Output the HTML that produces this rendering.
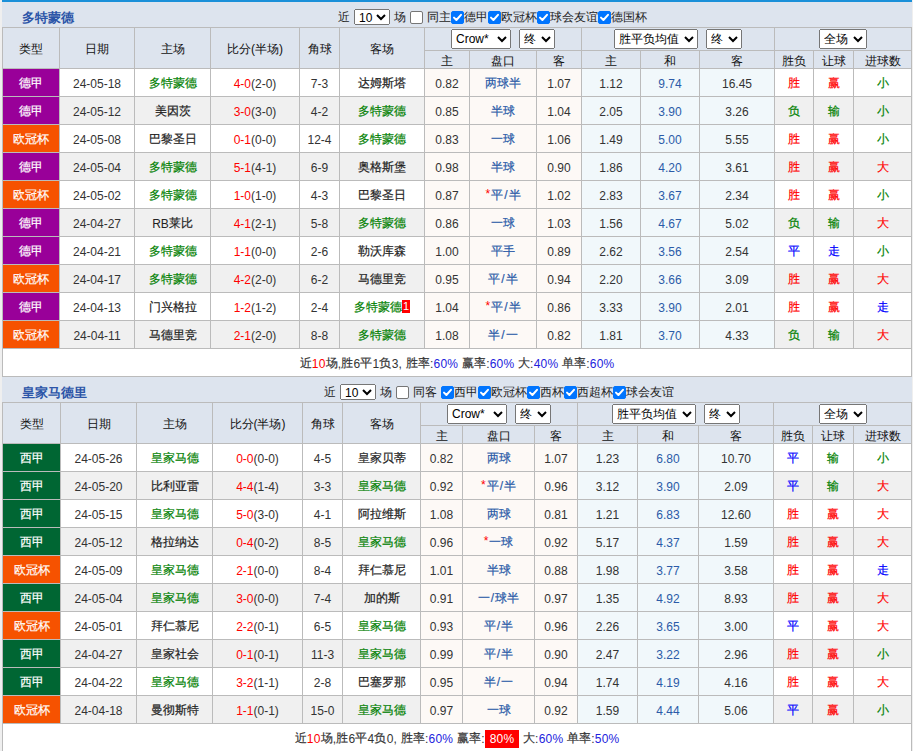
<!DOCTYPE html>
<html><head><meta charset="utf-8"><style>
*{box-sizing:border-box}
html,body{margin:0;padding:0}
body{width:913px;height:751px;overflow:hidden;background:#efefef;position:relative;font-family:"Liberation Sans",sans-serif;font-size:12px;color:#333}
.sec{position:absolute;left:2px;width:910px}
.bluebar{position:absolute;left:0;top:0;width:910px;height:2px;background:#1a90d9}
.hbar{position:absolute;left:0;width:910px;height:25px;background:#dde4ee}
.ttl{position:absolute;left:20px;top:8px;font-size:13px;font-weight:bold;color:#2c55a8;line-height:15px}
.ct{position:absolute;line-height:16px;white-space:nowrap;color:#222;font-size:12px}
.cb{position:absolute;width:13px;height:13px;border:1px solid #767676;border-radius:2px;background:#fff}
.cb.on{background:#0075ff;border-color:#0075ff}
.cb svg{position:absolute;left:-1px;top:-1px}
select{font-family:"Liberation Sans",sans-serif;padding:0;margin:0;color:#000}
select.s10{position:absolute;width:36px;height:16px;font-size:12px}
select.hs{height:20px;font-size:12px;vertical-align:middle}
table{position:absolute;left:0;width:910px;table-layout:fixed;border-collapse:separate;border-spacing:0;border-left:1px solid #bbb;border-top:1px solid #bbb;background:#fff}
th,td{border-right:1px solid #bbb;border-bottom:1px solid #bbb;padding:2px 0 0 0;line-height:14px;text-align:center;font-weight:normal;white-space:nowrap;overflow:hidden}
th{background:#dde4ee;color:#111}
tr.h1 th{height:23px}
tr.h1 th.sel{padding-top:0}
tr.h2 th{height:18px}
tr.odd td,tr.even td{height:28px}
tr.even td{background:#f0f0f0}
td.lg{color:#fff}
td.tm{color:#222}
td.tm.g{color:#008000}
.red{color:#f00}
i.c{font-style:normal;position:relative;top:-1px;-webkit-text-stroke:0.2px currentColor}
th{-webkit-text-stroke:0}
.sl{margin:0 1px}
.star{position:relative;top:-2px;-webkit-text-stroke:0;margin-right:1px}
td.o1{background:#fdf9f6 !important}
td.o2{background:#f1f8fb !important}
td.pk{color:#2b5ba8}
td.blu{color:#2b5ba8}
.rc{display:inline-block;background:#f00;color:#fff;font-size:11px;line-height:13px;width:8px;text-align:center;vertical-align:2px;-webkit-text-stroke:0}
tr.sum td{height:28px;background:#fff;letter-spacing:0.2px}
.bl{color:#2222dd}
.yb{background:#f00;color:#fff;padding:2px 5px 2px 5px;-webkit-text-stroke:0}
</style></head><body>
<div class="sec" style="top:0px">
<div class="bluebar"></div>
<div class="hbar" style="top:2px"><span class="ttl">多特蒙德</span>
<span class="ct" style="left:336px;top:7px">近</span>
<select class="s10" style="left:352px;top:7px"><option>10</option></select>
<span class="ct" style="left:392px;top:7px">场</span>
<span class="cb" style="left:408px;top:9px"></span>
<span class="ct" style="left:425px;top:7px">同主</span>
<span class="cb on" style="left:449px;top:9px"><svg width="13" height="13" viewBox="0 0 13 13"><path d="M3 6.6 L5.4 9 L10 3.8" stroke="#fff" stroke-width="2" fill="none" stroke-linecap="round" stroke-linejoin="round"/></svg></span>
<span class="ct" style="left:462px;top:7px">德甲</span>
<span class="cb on" style="left:486px;top:9px"><svg width="13" height="13" viewBox="0 0 13 13"><path d="M3 6.6 L5.4 9 L10 3.8" stroke="#fff" stroke-width="2" fill="none" stroke-linecap="round" stroke-linejoin="round"/></svg></span>
<span class="ct" style="left:499px;top:7px">欧冠杯</span>
<span class="cb on" style="left:535px;top:9px"><svg width="13" height="13" viewBox="0 0 13 13"><path d="M3 6.6 L5.4 9 L10 3.8" stroke="#fff" stroke-width="2" fill="none" stroke-linecap="round" stroke-linejoin="round"/></svg></span>
<span class="ct" style="left:548px;top:7px">球会友谊</span>
<span class="cb on" style="left:596px;top:9px"><svg width="13" height="13" viewBox="0 0 13 13"><path d="M3 6.6 L5.4 9 L10 3.8" stroke="#fff" stroke-width="2" fill="none" stroke-linecap="round" stroke-linejoin="round"/></svg></span>
<span class="ct" style="left:609px;top:7px">德国杯</span>
</div>
<table style="top:27px"><colgroup>
<col style="width:57px">
<col style="width:75px">
<col style="width:76px">
<col style="width:89px">
<col style="width:40px">
<col style="width:85px">
<col style="width:45px">
<col style="width:67px">
<col style="width:45px">
<col style="width:59px">
<col style="width:59px">
<col style="width:75px">
<col style="width:39px">
<col style="width:40px">
<col style="width:58px">
</colgroup>
<tr class="h1">
<th rowspan="2">类型</th>
<th rowspan="2">日期</th>
<th rowspan="2">主场</th>
<th rowspan="2">比分(半场)</th>
<th rowspan="2">角球</th>
<th rowspan="2">客场</th>
<th colspan="3" class="sel"><select class="hs" style="width:60px"><option>Crow*</option></select><select class="hs" style="width:36px;margin-left:8px"><option>终</option></select></th>
<th colspan="3" class="sel"><select class="hs" style="width:84px"><option>胜平负均值</option></select><select class="hs" style="width:36px;margin-left:8px"><option>终</option></select></th>
<th colspan="3" class="sel"><select class="hs" style="width:48px"><option>全场</option></select></th>
</tr><tr class="h2">
<th>主</th>
<th>盘口</th>
<th>客</th>
<th>主</th>
<th>和</th>
<th>客</th>
<th>胜负</th>
<th>让球</th>
<th>进球数</th>
</tr>
<tr class="odd">
<td class="lg" style="background:#990099"><i class="c">德甲</i></td>
<td class="dt">24-05-18</td>
<td class="tm g"><i class="c">多特蒙德</i></td>
<td class="sc"><span class="red">4-0</span>(2-0)</td>
<td class="cn">7-3</td>
<td class="tm "><i class="c">达姆斯塔</i></td>
<td class="o1">0.82</td>
<td class="o1 pk"><i class="c">两球半</i></td>
<td class="o1">1.07</td>
<td class="o2">1.12</td>
<td class="o2 blu">9.74</td>
<td class="o2">16.45</td>
<td class="rs" style="color:#f00"><i class="c">胜</i></td>
<td class="rs" style="color:#f00"><i class="c">赢</i></td>
<td class="rs" style="color:#008000"><i class="c">小</i></td>
</tr>
<tr class="even">
<td class="lg" style="background:#990099"><i class="c">德甲</i></td>
<td class="dt">24-05-12</td>
<td class="tm "><i class="c">美因茨</i></td>
<td class="sc"><span class="red">3-0</span>(3-0)</td>
<td class="cn">4-2</td>
<td class="tm g"><i class="c">多特蒙德</i></td>
<td class="o1">0.85</td>
<td class="o1 pk"><i class="c">半球</i></td>
<td class="o1">1.04</td>
<td class="o2">2.05</td>
<td class="o2 blu">3.90</td>
<td class="o2">3.26</td>
<td class="rs" style="color:#008000"><i class="c">负</i></td>
<td class="rs" style="color:#008000"><i class="c">输</i></td>
<td class="rs" style="color:#008000"><i class="c">小</i></td>
</tr>
<tr class="odd">
<td class="lg" style="background:#f65200"><i class="c">欧冠杯</i></td>
<td class="dt">24-05-08</td>
<td class="tm "><i class="c">巴黎圣日</i></td>
<td class="sc"><span class="red">0-1</span>(0-0)</td>
<td class="cn">12-4</td>
<td class="tm g"><i class="c">多特蒙德</i></td>
<td class="o1">0.83</td>
<td class="o1 pk"><i class="c">一球</i></td>
<td class="o1">1.06</td>
<td class="o2">1.49</td>
<td class="o2 blu">5.00</td>
<td class="o2">5.55</td>
<td class="rs" style="color:#f00"><i class="c">胜</i></td>
<td class="rs" style="color:#f00"><i class="c">赢</i></td>
<td class="rs" style="color:#008000"><i class="c">小</i></td>
</tr>
<tr class="even">
<td class="lg" style="background:#990099"><i class="c">德甲</i></td>
<td class="dt">24-05-04</td>
<td class="tm g"><i class="c">多特蒙德</i></td>
<td class="sc"><span class="red">5-1</span>(4-1)</td>
<td class="cn">6-9</td>
<td class="tm "><i class="c">奥格斯堡</i></td>
<td class="o1">0.98</td>
<td class="o1 pk"><i class="c">半球</i></td>
<td class="o1">0.90</td>
<td class="o2">1.86</td>
<td class="o2 blu">4.20</td>
<td class="o2">3.61</td>
<td class="rs" style="color:#f00"><i class="c">胜</i></td>
<td class="rs" style="color:#f00"><i class="c">赢</i></td>
<td class="rs" style="color:#f00"><i class="c">大</i></td>
</tr>
<tr class="odd">
<td class="lg" style="background:#f65200"><i class="c">欧冠杯</i></td>
<td class="dt">24-05-02</td>
<td class="tm g"><i class="c">多特蒙德</i></td>
<td class="sc"><span class="red">1-0</span>(1-0)</td>
<td class="cn">4-3</td>
<td class="tm "><i class="c">巴黎圣日</i></td>
<td class="o1">0.87</td>
<td class="o1 pk"><span class="red star">*</span><i class="c">平</i><span class="sl"><i class="c">/</i></span><i class="c">半</i></td>
<td class="o1">1.02</td>
<td class="o2">2.83</td>
<td class="o2 blu">3.67</td>
<td class="o2">2.34</td>
<td class="rs" style="color:#f00"><i class="c">胜</i></td>
<td class="rs" style="color:#f00"><i class="c">赢</i></td>
<td class="rs" style="color:#008000"><i class="c">小</i></td>
</tr>
<tr class="even">
<td class="lg" style="background:#990099"><i class="c">德甲</i></td>
<td class="dt">24-04-27</td>
<td class="tm ">RB<i class="c">莱比</i></td>
<td class="sc"><span class="red">4-1</span>(2-1)</td>
<td class="cn">5-8</td>
<td class="tm g"><i class="c">多特蒙德</i></td>
<td class="o1">0.86</td>
<td class="o1 pk"><i class="c">一球</i></td>
<td class="o1">1.03</td>
<td class="o2">1.56</td>
<td class="o2 blu">4.67</td>
<td class="o2">5.02</td>
<td class="rs" style="color:#008000"><i class="c">负</i></td>
<td class="rs" style="color:#008000"><i class="c">输</i></td>
<td class="rs" style="color:#f00"><i class="c">大</i></td>
</tr>
<tr class="odd">
<td class="lg" style="background:#990099"><i class="c">德甲</i></td>
<td class="dt">24-04-21</td>
<td class="tm g"><i class="c">多特蒙德</i></td>
<td class="sc"><span class="red">1-1</span>(0-0)</td>
<td class="cn">2-6</td>
<td class="tm "><i class="c">勒沃库森</i></td>
<td class="o1">1.00</td>
<td class="o1 pk"><i class="c">平手</i></td>
<td class="o1">0.89</td>
<td class="o2">2.62</td>
<td class="o2 blu">3.56</td>
<td class="o2">2.54</td>
<td class="rs" style="color:#00f"><i class="c">平</i></td>
<td class="rs" style="color:#00f"><i class="c">走</i></td>
<td class="rs" style="color:#008000"><i class="c">小</i></td>
</tr>
<tr class="even">
<td class="lg" style="background:#f65200"><i class="c">欧冠杯</i></td>
<td class="dt">24-04-17</td>
<td class="tm g"><i class="c">多特蒙德</i></td>
<td class="sc"><span class="red">4-2</span>(2-0)</td>
<td class="cn">6-2</td>
<td class="tm "><i class="c">马德里竞</i></td>
<td class="o1">0.95</td>
<td class="o1 pk"><i class="c">平</i><span class="sl"><i class="c">/</i></span><i class="c">半</i></td>
<td class="o1">0.94</td>
<td class="o2">2.20</td>
<td class="o2 blu">3.66</td>
<td class="o2">3.09</td>
<td class="rs" style="color:#f00"><i class="c">胜</i></td>
<td class="rs" style="color:#f00"><i class="c">赢</i></td>
<td class="rs" style="color:#f00"><i class="c">大</i></td>
</tr>
<tr class="odd">
<td class="lg" style="background:#990099"><i class="c">德甲</i></td>
<td class="dt">24-04-13</td>
<td class="tm "><i class="c">门兴格拉</i></td>
<td class="sc"><span class="red">1-2</span>(1-2)</td>
<td class="cn">2-4</td>
<td class="tm g"><i class="c">多特蒙德</i><span class="rc">1</span></td>
<td class="o1">1.04</td>
<td class="o1 pk"><span class="red star">*</span><i class="c">平</i><span class="sl"><i class="c">/</i></span><i class="c">半</i></td>
<td class="o1">0.86</td>
<td class="o2">3.33</td>
<td class="o2 blu">3.90</td>
<td class="o2">2.01</td>
<td class="rs" style="color:#f00"><i class="c">胜</i></td>
<td class="rs" style="color:#f00"><i class="c">赢</i></td>
<td class="rs" style="color:#00f"><i class="c">走</i></td>
</tr>
<tr class="even">
<td class="lg" style="background:#f65200"><i class="c">欧冠杯</i></td>
<td class="dt">24-04-11</td>
<td class="tm "><i class="c">马德里竞</i></td>
<td class="sc"><span class="red">2-1</span>(2-0)</td>
<td class="cn">8-8</td>
<td class="tm g"><i class="c">多特蒙德</i></td>
<td class="o1">1.08</td>
<td class="o1 pk"><i class="c">半</i><span class="sl"><i class="c">/</i></span><i class="c">一</i></td>
<td class="o1">0.82</td>
<td class="o2">1.81</td>
<td class="o2 blu">3.70</td>
<td class="o2">4.33</td>
<td class="rs" style="color:#008000"><i class="c">负</i></td>
<td class="rs" style="color:#008000"><i class="c">输</i></td>
<td class="rs" style="color:#f00"><i class="c">大</i></td>
</tr>
<tr class="sum"><td colspan="15"><i class="c">近</i><span class="red">10</span><i class="c">场</i>,<i class="c">胜</i>6<i class="c">平</i>1<i class="c">负</i>3, <i class="c">胜率</i>:<span class="bl">60%</span> <i class="c">赢率</i>:<span class="bl">60%</span> <i class="c">大</i>:<span class="bl">40%</span> <i class="c">单率</i>:<span class="bl">60%</span></td></tr>
</table></div>
<div class="sec" style="top:375px">
<div class="hbar" style="top:2px"><span class="ttl">皇家马德里</span>
<span class="ct" style="left:322px;top:7px">近</span>
<select class="s10" style="left:338px;top:7px"><option>10</option></select>
<span class="ct" style="left:378px;top:7px">场</span>
<span class="cb" style="left:394px;top:9px"></span>
<span class="ct" style="left:411px;top:7px">同客</span>
<span class="cb on" style="left:439px;top:9px"><svg width="13" height="13" viewBox="0 0 13 13"><path d="M3 6.6 L5.4 9 L10 3.8" stroke="#fff" stroke-width="2" fill="none" stroke-linecap="round" stroke-linejoin="round"/></svg></span>
<span class="ct" style="left:452px;top:7px">西甲</span>
<span class="cb on" style="left:476px;top:9px"><svg width="13" height="13" viewBox="0 0 13 13"><path d="M3 6.6 L5.4 9 L10 3.8" stroke="#fff" stroke-width="2" fill="none" stroke-linecap="round" stroke-linejoin="round"/></svg></span>
<span class="ct" style="left:489px;top:7px">欧冠杯</span>
<span class="cb on" style="left:525px;top:9px"><svg width="13" height="13" viewBox="0 0 13 13"><path d="M3 6.6 L5.4 9 L10 3.8" stroke="#fff" stroke-width="2" fill="none" stroke-linecap="round" stroke-linejoin="round"/></svg></span>
<span class="ct" style="left:538px;top:7px">西杯</span>
<span class="cb on" style="left:562px;top:9px"><svg width="13" height="13" viewBox="0 0 13 13"><path d="M3 6.6 L5.4 9 L10 3.8" stroke="#fff" stroke-width="2" fill="none" stroke-linecap="round" stroke-linejoin="round"/></svg></span>
<span class="ct" style="left:575px;top:7px">西超杯</span>
<span class="cb on" style="left:611px;top:9px"><svg width="13" height="13" viewBox="0 0 13 13"><path d="M3 6.6 L5.4 9 L10 3.8" stroke="#fff" stroke-width="2" fill="none" stroke-linecap="round" stroke-linejoin="round"/></svg></span>
<span class="ct" style="left:624px;top:7px">球会友谊</span>
</div>
<table style="top:27px"><colgroup>
<col style="width:58px">
<col style="width:76px">
<col style="width:76px">
<col style="width:90px">
<col style="width:40px">
<col style="width:78px">
<col style="width:42px">
<col style="width:72px">
<col style="width:43px">
<col style="width:60px">
<col style="width:61px">
<col style="width:75px">
<col style="width:39px">
<col style="width:41px">
<col style="width:58px">
</colgroup>
<tr class="h1">
<th rowspan="2">类型</th>
<th rowspan="2">日期</th>
<th rowspan="2">主场</th>
<th rowspan="2">比分(半场)</th>
<th rowspan="2">角球</th>
<th rowspan="2">客场</th>
<th colspan="3" class="sel"><select class="hs" style="width:60px"><option>Crow*</option></select><select class="hs" style="width:36px;margin-left:8px"><option>终</option></select></th>
<th colspan="3" class="sel"><select class="hs" style="width:84px"><option>胜平负均值</option></select><select class="hs" style="width:36px;margin-left:8px"><option>终</option></select></th>
<th colspan="3" class="sel"><select class="hs" style="width:48px"><option>全场</option></select></th>
</tr><tr class="h2">
<th>主</th>
<th>盘口</th>
<th>客</th>
<th>主</th>
<th>和</th>
<th>客</th>
<th>胜负</th>
<th>让球</th>
<th>进球数</th>
</tr>
<tr class="odd">
<td class="lg" style="background:#006633"><i class="c">西甲</i></td>
<td class="dt">24-05-26</td>
<td class="tm g"><i class="c">皇家马德</i></td>
<td class="sc"><span class="red">0-0</span>(0-0)</td>
<td class="cn">4-5</td>
<td class="tm "><i class="c">皇家贝蒂</i></td>
<td class="o1">0.82</td>
<td class="o1 pk"><i class="c">两球</i></td>
<td class="o1">1.07</td>
<td class="o2">1.23</td>
<td class="o2 blu">6.80</td>
<td class="o2">10.70</td>
<td class="rs" style="color:#00f"><i class="c">平</i></td>
<td class="rs" style="color:#008000"><i class="c">输</i></td>
<td class="rs" style="color:#008000"><i class="c">小</i></td>
</tr>
<tr class="even">
<td class="lg" style="background:#006633"><i class="c">西甲</i></td>
<td class="dt">24-05-20</td>
<td class="tm "><i class="c">比利亚雷</i></td>
<td class="sc"><span class="red">4-4</span>(1-4)</td>
<td class="cn">3-3</td>
<td class="tm g"><i class="c">皇家马德</i></td>
<td class="o1">0.92</td>
<td class="o1 pk"><span class="red star">*</span><i class="c">平</i><span class="sl"><i class="c">/</i></span><i class="c">半</i></td>
<td class="o1">0.96</td>
<td class="o2">3.12</td>
<td class="o2 blu">3.90</td>
<td class="o2">2.09</td>
<td class="rs" style="color:#00f"><i class="c">平</i></td>
<td class="rs" style="color:#008000"><i class="c">输</i></td>
<td class="rs" style="color:#f00"><i class="c">大</i></td>
</tr>
<tr class="odd">
<td class="lg" style="background:#006633"><i class="c">西甲</i></td>
<td class="dt">24-05-15</td>
<td class="tm g"><i class="c">皇家马德</i></td>
<td class="sc"><span class="red">5-0</span>(3-0)</td>
<td class="cn">4-1</td>
<td class="tm "><i class="c">阿拉维斯</i></td>
<td class="o1">1.08</td>
<td class="o1 pk"><i class="c">两球</i></td>
<td class="o1">0.81</td>
<td class="o2">1.21</td>
<td class="o2 blu">6.83</td>
<td class="o2">12.60</td>
<td class="rs" style="color:#f00"><i class="c">胜</i></td>
<td class="rs" style="color:#f00"><i class="c">赢</i></td>
<td class="rs" style="color:#f00"><i class="c">大</i></td>
</tr>
<tr class="even">
<td class="lg" style="background:#006633"><i class="c">西甲</i></td>
<td class="dt">24-05-12</td>
<td class="tm "><i class="c">格拉纳达</i></td>
<td class="sc"><span class="red">0-4</span>(0-2)</td>
<td class="cn">8-5</td>
<td class="tm g"><i class="c">皇家马德</i></td>
<td class="o1">0.96</td>
<td class="o1 pk"><span class="red star">*</span><i class="c">一球</i></td>
<td class="o1">0.92</td>
<td class="o2">5.17</td>
<td class="o2 blu">4.37</td>
<td class="o2">1.59</td>
<td class="rs" style="color:#f00"><i class="c">胜</i></td>
<td class="rs" style="color:#f00"><i class="c">赢</i></td>
<td class="rs" style="color:#f00"><i class="c">大</i></td>
</tr>
<tr class="odd">
<td class="lg" style="background:#f65200"><i class="c">欧冠杯</i></td>
<td class="dt">24-05-09</td>
<td class="tm g"><i class="c">皇家马德</i></td>
<td class="sc"><span class="red">2-1</span>(0-0)</td>
<td class="cn">8-4</td>
<td class="tm "><i class="c">拜仁慕尼</i></td>
<td class="o1">1.01</td>
<td class="o1 pk"><i class="c">半球</i></td>
<td class="o1">0.88</td>
<td class="o2">1.98</td>
<td class="o2 blu">3.77</td>
<td class="o2">3.58</td>
<td class="rs" style="color:#f00"><i class="c">胜</i></td>
<td class="rs" style="color:#f00"><i class="c">赢</i></td>
<td class="rs" style="color:#00f"><i class="c">走</i></td>
</tr>
<tr class="even">
<td class="lg" style="background:#006633"><i class="c">西甲</i></td>
<td class="dt">24-05-04</td>
<td class="tm g"><i class="c">皇家马德</i></td>
<td class="sc"><span class="red">3-0</span>(0-0)</td>
<td class="cn">7-4</td>
<td class="tm "><i class="c">加的斯</i></td>
<td class="o1">0.91</td>
<td class="o1 pk"><i class="c">一</i><span class="sl"><i class="c">/</i></span><i class="c">球半</i></td>
<td class="o1">0.97</td>
<td class="o2">1.35</td>
<td class="o2 blu">4.92</td>
<td class="o2">8.93</td>
<td class="rs" style="color:#f00"><i class="c">胜</i></td>
<td class="rs" style="color:#f00"><i class="c">赢</i></td>
<td class="rs" style="color:#f00"><i class="c">大</i></td>
</tr>
<tr class="odd">
<td class="lg" style="background:#f65200"><i class="c">欧冠杯</i></td>
<td class="dt">24-05-01</td>
<td class="tm "><i class="c">拜仁慕尼</i></td>
<td class="sc"><span class="red">2-2</span>(0-1)</td>
<td class="cn">6-5</td>
<td class="tm g"><i class="c">皇家马德</i></td>
<td class="o1">0.93</td>
<td class="o1 pk"><i class="c">平</i><span class="sl"><i class="c">/</i></span><i class="c">半</i></td>
<td class="o1">0.96</td>
<td class="o2">2.26</td>
<td class="o2 blu">3.65</td>
<td class="o2">3.00</td>
<td class="rs" style="color:#00f"><i class="c">平</i></td>
<td class="rs" style="color:#f00"><i class="c">赢</i></td>
<td class="rs" style="color:#f00"><i class="c">大</i></td>
</tr>
<tr class="even">
<td class="lg" style="background:#006633"><i class="c">西甲</i></td>
<td class="dt">24-04-27</td>
<td class="tm "><i class="c">皇家社会</i></td>
<td class="sc"><span class="red">0-1</span>(0-1)</td>
<td class="cn">11-3</td>
<td class="tm g"><i class="c">皇家马德</i></td>
<td class="o1">0.99</td>
<td class="o1 pk"><i class="c">平</i><span class="sl"><i class="c">/</i></span><i class="c">半</i></td>
<td class="o1">0.90</td>
<td class="o2">2.47</td>
<td class="o2 blu">3.22</td>
<td class="o2">2.96</td>
<td class="rs" style="color:#f00"><i class="c">胜</i></td>
<td class="rs" style="color:#f00"><i class="c">赢</i></td>
<td class="rs" style="color:#008000"><i class="c">小</i></td>
</tr>
<tr class="odd">
<td class="lg" style="background:#006633"><i class="c">西甲</i></td>
<td class="dt">24-04-22</td>
<td class="tm g"><i class="c">皇家马德</i></td>
<td class="sc"><span class="red">3-2</span>(1-1)</td>
<td class="cn">2-8</td>
<td class="tm "><i class="c">巴塞罗那</i></td>
<td class="o1">0.95</td>
<td class="o1 pk"><i class="c">半</i><span class="sl"><i class="c">/</i></span><i class="c">一</i></td>
<td class="o1">0.94</td>
<td class="o2">1.74</td>
<td class="o2 blu">4.19</td>
<td class="o2">4.16</td>
<td class="rs" style="color:#f00"><i class="c">胜</i></td>
<td class="rs" style="color:#f00"><i class="c">赢</i></td>
<td class="rs" style="color:#f00"><i class="c">大</i></td>
</tr>
<tr class="even">
<td class="lg" style="background:#f65200"><i class="c">欧冠杯</i></td>
<td class="dt">24-04-18</td>
<td class="tm "><i class="c">曼彻斯特</i></td>
<td class="sc"><span class="red">1-1</span>(0-1)</td>
<td class="cn">15-0</td>
<td class="tm g"><i class="c">皇家马德</i></td>
<td class="o1">0.97</td>
<td class="o1 pk"><i class="c">一球</i></td>
<td class="o1">0.92</td>
<td class="o2">1.59</td>
<td class="o2 blu">4.44</td>
<td class="o2">5.06</td>
<td class="rs" style="color:#00f"><i class="c">平</i></td>
<td class="rs" style="color:#f00"><i class="c">赢</i></td>
<td class="rs" style="color:#008000"><i class="c">小</i></td>
</tr>
<tr class="sum"><td colspan="15"><i class="c">近</i><span class="red">10</span><i class="c">场</i>,<i class="c">胜</i>6<i class="c">平</i>4<i class="c">负</i>0, <i class="c">胜率</i>:<span class="bl">60%</span> <i class="c">赢率</i>:<span class="yb">80%</span> <i class="c">大</i>:<span class="bl">60%</span> <i class="c">单率</i>:<span class="bl">50%</span></td></tr>
</table></div>
</body></html>
